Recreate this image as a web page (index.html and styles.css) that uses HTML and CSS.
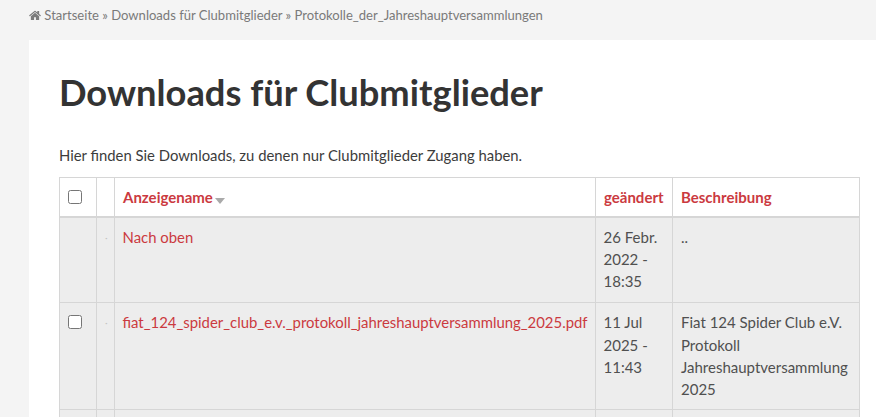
FILE: index.html
```html
<!DOCTYPE html>
<html lang="de">

<head>
    <meta charset="utf-8">
    <meta name="viewport" content="width=device-width, initial-scale=1.0">
    <title>Downloads für Clubmitglieder</title>
    <link rel="stylesheet" href="styles.css">
</head>

<body>
    <nav class="breadcrumb">
        <svg class="home" viewBox="0 0 1664 1792" aria-hidden="true">
            <path d="M1408 992v480q0 26-19 45t-45 19h-384v-384h-256v384h-384q-26 0-45-19t-19-45v-480q0-1 .5-3t.5-3l575-474 575 474q1 2 1 6zm223-69l-62 74q-8 9-21 11h-3q-13 0-21-7l-692-577-692 577q-12 8-24 7-13-2-21-11l-62-74q-8-10-7-23.500t11-21.500l719-599q32-26 76-26t76 26l244 204v-195q0-14 9-23t23-9h192q14 0 23 9t9 23v408l219 182q10 8 11 21.500t-7 23.500z"/>
        </svg>
        <a href="#">Startseite</a> » <a href="#">Downloads für Clubmitglieder</a> » <a href="#">Protokolle_der_Jahreshauptversammlungen</a>
    </nav>

    <main class="content">
        <h1>Downloads für Clubmitglieder</h1>
        <p class="intro">Hier finden Sie Downloads, zu denen nur Clubmitglieder Zugang haben.</p>

        <table class="files">
            <colgroup>
                <col class="col-check">
                <col class="col-icon">
                <col class="col-name">
                <col class="col-date">
                <col class="col-desc">
            </colgroup>
            <thead>
                <tr>
                    <th><span class="box"></span></th>
                    <th></th>
                    <th><a href="#">Anzeigename</a><span class="sort"></span></th>
                    <th><a href="#">geändert</a></th>
                    <th><a href="#">Beschreibung</a></th>
                </tr>
            </thead>
            <tbody>
                <tr>
                    <td></td>
                    <td class="dot">·</td>
                    <td><a href="#">Nach oben</a></td>
                    <td>26 Febr. 2022 - 18:35</td>
                    <td>..</td>
                </tr>
                <tr class="row-last">
                    <td><span class="box"></span></td>
                    <td class="dot">·</td>
                    <td><a href="#">fiat_124_spider_club_e.v._protokoll_jahreshauptversammlung_2025.pdf</a></td>
                    <td>11 Jul 2025 - 11:43</td>
                    <td>Fiat 124 Spider Club e.V. Protokoll Jahreshauptversammlung 2025</td>
                </tr>
                <tr>
                    <td></td>
                    <td></td>
                    <td></td>
                    <td></td>
                    <td></td>
                </tr>
            </tbody>
        </table>
    </main>
</body>

</html>
```

FILE: styles.css
```css
html {
    overflow: hidden;
    height: 417px;
}

body {
    margin: 0;
    height: 417px;
    overflow: hidden;
    background-color: #f4f4f4;
    color: #505050;
    font-family: Lato, "Open Sans", sans-serif;
    font-size: 15px;
    line-height: 22.3px;
}

a {
    color: #cb3a3f;
    text-decoration: none;
}

.breadcrumb {
    padding: 4px 0 0 29px;
    height: 40px;
    box-sizing: border-box;
    font-size: 13.05px;
    line-height: 22px;
    color: #7a7a7a;
}

.breadcrumb a {
    color: #7a7a7a;
}

.home {
    width: 12px;
    height: 13px;
    vertical-align: -2px;
    fill: #7a7a7a;
}

.content {
    margin-left: 29px;
    padding: 23px 16px 0 30px;
    background-color: #fff;
    height: 354px;
    overflow: hidden;
}

h1 {
    margin: 0;
    font-size: 36.3px;
    line-height: 58px;
    font-weight: 700;
    color: #333;
}

.intro {
    margin: 23px 0 11px;
    font-size: 14.85px;
    color: #3c3c3c;
}

.files {
    width: 801px;
    table-layout: fixed;
    border-collapse: collapse;
}

.col-check {
    width: 37px;
}

.col-icon {
    width: 18px;
}

.col-date {
    width: 77px;
}

.col-desc {
    width: 187px;
}

.files th,
.files td {
    border: 1px solid #d6d6d6;
    padding: 8px 8px 9px;
    text-align: left;
    vertical-align: top;
    background-color: #ededed;
}

.files th {
    background-color: #fff;
    border-bottom: 2px solid #d6d6d6;
    padding-bottom: 7px;
    font-weight: 700;
}

.files tbody tr:first-child td {
    padding-bottom: 10px;
}

.files .row-last td {
    padding-bottom: 8px;
}

.files td:nth-child(3),
.files td:nth-child(4) {
    padding-left: 7.5px;
}

.files td a {
    font-size: 14.9px;
}

.box {
    display: block;
    width: 12px;
    height: 12px;
    margin-top: 4px;
    border: 1px solid #767676;
    border-radius: 2.5px;
    background-color: #fff;
}

.sort {
    display: inline-block;
    margin-left: 2px;
    vertical-align: -1px;
    border-left: 5.5px solid transparent;
    border-right: 5.5px solid transparent;
    border-top: 6px solid #aaa;
}

.dot {
    color: #c4c4c4;
    font-size: 10px;
}
```
